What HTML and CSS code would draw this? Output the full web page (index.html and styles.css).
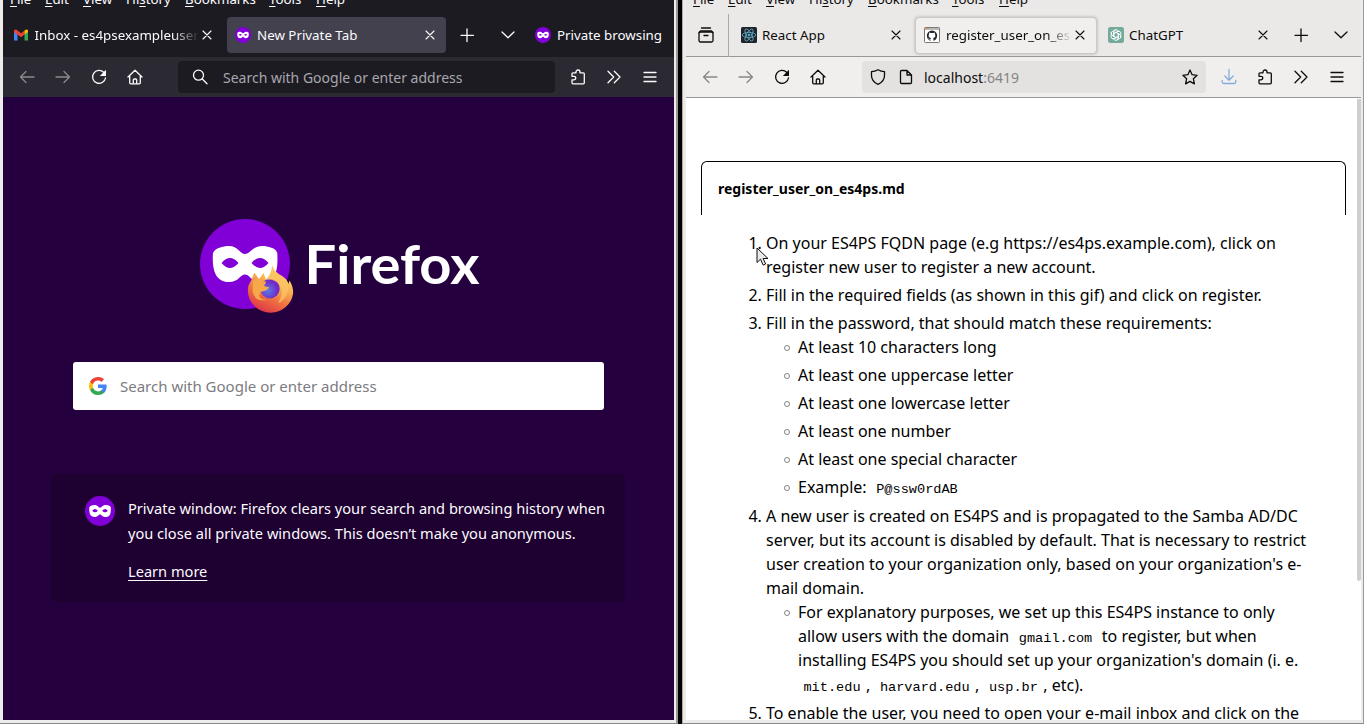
FILE: index.html
```html
<!DOCTYPE html>
<html lang="en">
<head>
<meta charset="utf-8">
<title>Private browsing and localhost</title>
<link rel="stylesheet" href="styles.css">
</head>
<body>
<svg class="defs" width="0" height="0" aria-hidden="true">
  <defs>
    <linearGradient id="flame" x1=".85" y1="0" x2=".35" y2="1"><stop offset="0" stop-color="#ffe37a"/><stop offset=".4" stop-color="#f9b555"/><stop offset=".7" stop-color="#ee7040"/><stop offset="1" stop-color="#de3648"/></linearGradient>
    <radialGradient id="globe" cx=".4" cy=".6"><stop offset="0" stop-color="#5a7be8"/><stop offset="1" stop-color="#7229c8"/></radialGradient>
  </defs>
  <symbol id="back" viewBox="0 0 16 16"><path d="M15 8H1.5M7 2.5 1.5 8 7 13.5"/></symbol>
  <symbol id="forward" viewBox="0 0 16 16"><path d="M1 8h13.5M9 2.5 14.500 8 9 13.500"/></symbol>
  <symbol id="reload" viewBox="0 0 16 16"><path d="M12.700 3.300A6.500 6.500 0 1 0 14.500 9"/><path class="solid" d="M15 .8v6.200H8.800z"/></symbol>
  <symbol id="home" viewBox="0 0 16 16"><path d="M1 8 8 1.200 15 8M2.700 7v6.800q0 1 1 1h8.600q1 0 1-1V7M6.300 14.500v-3.500q0-1 1-1h1.400q1 0 1 1v3.500"/></symbol>
  <symbol id="search" viewBox="0 0 16 16"><circle cx="6.500" cy="6.200" r="5"/><path d="m10.300 10 4.700 4.700"/></symbol>
  <symbol id="puzzle" viewBox="0 0 16 16"><path d="M6 3.800V3a2 2 0 0 1 4 0v.8h3.300q1 0 1 1v9q0 1-1 1H3q-1 0-1-1v-3h2a1.700 1.700 0 0 0 0-3.500H2V4.800q0-1 1-1z"/></symbol>
  <symbol id="more" viewBox="0 0 16 16"><path d="m2 2.300 5.700 5.700L2 13.700M8.300 2.300 14 8l-5.700 5.700"/></symbol>
  <symbol id="menu" viewBox="0 0 16 16"><path d="M2 3.500h12M2 8h12M2 12.500h12"/></symbol>
  <symbol id="close" viewBox="0 0 16 16"><path d="m4 4 8 8m0-8-8 8"/></symbol>
  <symbol id="plus" viewBox="0 0 16 16"><path d="M8 2v12.500M2 8.300h12.500"/></symbol>
  <symbol id="chevron" viewBox="0 0 16 16"><path d="m2 5 6 5.700L14 5"/></symbol>
  <symbol id="mask" viewBox="0 0 90 90"><circle cx="45" cy="45" r="45" fill="#8000d7"/><path fill="#fff" fill-rule="evenodd" d="M13 34C15 29 23 27 29 27 38 27 40 35 45 35 50 35 53 27 62 27 68 27 76 29 77.300 34 78 50 77 63 61 63 51 63 50 55.500 45 55.500S39 63 29 63C14 63 12 48 13 34zM21.500 44q8.500-10 17 0-8.500 10-17 0zm30 0q8.500-10 17 0-8.500 10-17 0z"/></symbol>
</svg>

<div class="desktop">
  <section class="window dark">
    <nav class="menubar"><span class="m1"><u>F</u>ile</span><span class="m2"><u>E</u>dit</span><span class="m3"><u>V</u>iew</span><span class="m4">Hi<u>s</u>tory</span><span class="m5"><u>B</u>ookmarks</span><span class="m6"><u>T</u>ools</span><span class="m7"><u>H</u>elp</span></nav>
    <div class="tabs">
      <div class="tab inbox">
        <svg class="fav" viewBox="0 0 16 16"><path fill="#4285f4" d="M1 4v9.500h3.500V6z"/><path fill="#34a853" d="M15 4v9.500h-3.500V6z"/><path fill="#ea4335" d="M1 3.500Q2.500 1.500 4.500 3.500L8 6.300l3.500-2.800v4L8 10.300 1 5z"/><path fill="#fbbc04" d="M11.500 3.500Q14 1.500 15 3.500V5l-3.500 2.500z"/></svg>
        <span class="label fade">Inbox - es4psexampleuser</span>
        <svg class="ico"><use href="#close"/></svg>
      </div>
      <div class="tab active">
        <svg class="fav"><use href="#mask"/></svg><span class="label">New Private Tab</span><svg class="ico"><use href="#close"/></svg>
      </div>
      <svg class="ico add"><use href="#plus"/></svg>
      <svg class="ico list"><use href="#chevron"/></svg>
      <div class="private"><svg class="fav"><use href="#mask"/></svg><span>Private browsing</span></div>
    </div>
    <div class="toolbar">
      <div class="navs"><svg class="ico dim"><use href="#back"/></svg><svg class="ico dim"><use href="#forward"/></svg><svg class="ico"><use href="#reload"/></svg><svg class="ico"><use href="#home"/></svg></div>
      <div class="url"><svg class="ico"><use href="#search"/></svg><span>Search with Google or enter address</span></div>
      <div class="tools"><svg class="ico"><use href="#puzzle"/></svg><svg class="ico"><use href="#more"/></svg><svg class="ico"><use href="#menu"/></svg></div>
    </div>
    <main class="private-page">
      <svg class="brand" viewBox="0 0 280 94">
        <use href="#mask" width="90" height="90"/>
        <path fill="url(#flame)" d="M72.300 46.500Q74 53 82 57q5 3 6.500 8l1-3.500q4 6 3.600 13A22.500 22.500 0 0 1 70.500 93.700 22.700 22.700 0 0 1 47.800 72q0-6 3.200-10l3.300-8.500 4.700 6.500 4.500-6 2.500 6.500q5-4 6.300-14z"/>
        <circle cx="70" cy="69.700" r="9.700" fill="url(#globe)"/>
        <path fill="#fbc463" d="M72.300 46.500Q74 53 82 57q8 5 6 15-3 10-10 12 7-11 1.500-18-4-6-13-5.500 5-5 5.800-14z" opacity=".75"/>
        <path fill="#f6a94a" d="m53 62 4-2.500 4.500 3h5l-2.500 4.500 5.500 1.500q-3 3.500-9 4.500-4 7 6 8-12 2-14-9z"/>
        <text class="wordmark" x="104.500" y="65" textLength="175" lengthAdjust="spacingAndGlyphs">Firefox</text>
      </svg>
      <div class="handoff">
        <svg class="google" viewBox="0 0 18 18"><path fill="#4285f4" d="M17.600 9.200q0-1-.15-1.800H9v3.500h4.800a4.100 4.100 0 0 1-1.800 2.700V16h3c1.700-1.600 2.600-4 2.600-6.800z"/><path fill="#34a853" d="M9 18c2.400 0 4.500-.8 6-2.200l-3-2.200A5.400 5.400 0 0 1 4 10.700H1V13a9 9 0 0 0 8 5z"/><path fill="#fbbc05" d="M4 10.700a5.400 5.400 0 0 1 0-3.400V5H1a9 9 0 0 0 0 8z"/><path fill="#ea4335" d="M9 3.600c1.300 0 2.500.4 3.400 1.300L15 2.300A9 9 0 0 0 1 5l3 2.300a5.400 5.400 0 0 1 5-3.700z"/></svg>
        <span>Search with Google or enter address</span>
      </div>
      <div class="info">
        <svg class="info-mask"><use href="#mask"/></svg>
        <div><p>Private window: Firefox clears your search and browsing history when<br>you close all private windows. This doesn’t make you anonymous.</p><a>Learn more</a></div>
      </div>
    </main>
  </section>

  <section class="window light">
    <nav class="menubar"><span class="m1"><u>F</u>ile</span><span class="m2"><u>E</u>dit</span><span class="m3"><u>V</u>iew</span><span class="m4">Hi<u>s</u>tory</span><span class="m5"><u>B</u>ookmarks</span><span class="m6"><u>T</u>ools</span><span class="m7"><u>H</u>elp</span></nav>
    <div class="tabs">
      <div class="view"><svg class="ico" viewBox="0 0 16 16"><rect x="1" y="5" width="14" height="10" rx="1.500"/><path d="M1 5.500 2.500 4h11L15 5.500M3.500 1h9M6 8.500h4"/></svg></div>
      <div class="tab react">
        <svg class="fav" viewBox="0 0 16 16"><rect width="16" height="16" rx="1.500" fill="#20232a"/><g fill="none" stroke="#61aecb" stroke-width=".8"><ellipse cx="8" cy="8" rx="6.800" ry="2.600"/><ellipse cx="8" cy="8" rx="6.800" ry="2.600" transform="rotate(60 8 8)"/><ellipse cx="8" cy="8" rx="6.800" ry="2.600" transform="rotate(120 8 8)"/></g><circle cx="8" cy="8" r="1.300" fill="#61aecb"/></svg>
        <span class="label">React App</span><svg class="ico"><use href="#close"/></svg>
      </div>
      <div class="tab active">
        <svg class="fav" viewBox="0 0 16 16"><rect x=".5" y=".5" width="15" height="15" rx=".8" fill="#fff" stroke="#777"/><path d="M1 2h14" stroke="#777"/><path d="M1 1.500h4" stroke="#e79849"/><circle cx="8" cy="8.700" r="5.200" fill="#24292e"/><path fill="#fff" d="M5.300 5.500 6.800 6h2.400l1.500-.5.300 1.500q1.200 3.500-1.800 3.900.4.500.3 3.200h-3v-1.200q-1.400.4-2-.9l-.7-.7q1 0 1.400.9.500.6 1.300.2l.3-1.500Q3.800 10.500 5 7z"/></svg>
        <span class="label fade">register_user_on_es4ps</span><svg class="ico"><use href="#close"/></svg>
      </div>
      <div class="tab chat">
        <svg class="fav" viewBox="0 0 16 16"><rect width="16" height="16" rx="2.500" fill="#74aa9c"/><g fill="none" stroke="#fff" stroke-width=".85"><path id="knot" d="M5.700 9.300V4.800q.4-2.100 2.500-2.100 1.600 0 2.300 1.300M5.700 6.700l3.700-2.100q2-1 3.400.8"/><use href="#knot" transform="rotate(60 8 8)"/><use href="#knot" transform="rotate(120 8 8)"/><use href="#knot" transform="rotate(180 8 8)"/><use href="#knot" transform="rotate(240 8 8)"/><use href="#knot" transform="rotate(300 8 8)"/></g></svg>
        <span class="label">ChatGPT</span><svg class="ico"><use href="#close"/></svg>
      </div>
      <svg class="ico add"><use href="#plus"/></svg>
      <svg class="ico list"><use href="#chevron"/></svg>
    </div>
    <div class="toolbar">
      <div class="navs"><svg class="ico dim"><use href="#back"/></svg><svg class="ico dim"><use href="#forward"/></svg><svg class="ico"><use href="#reload"/></svg><svg class="ico"><use href="#home"/></svg></div>
      <div class="url">
        <svg class="ico" viewBox="0 0 16 16"><path d="M8 .8q3 1.700 6.500 1.900v3.800q0 6-6.500 8.800-6.500-2.800-6.500-8.800V2.700Q5 2.500 8 .8z"/></svg>
        <svg class="ico page" viewBox="0 0 16 16"><path d="M3.500 1.500H9l4.500 4.500v7.500q0 1-1 1h-9q-1 0-1-1v-11q0-1 1-1zM9 1.500V6h4.500"/></svg>
        <span>localhost<i>:6419</i></span>
        <svg class="ico star" viewBox="0 0 16 16"><path d="m8 1 2.100 4.700 5 .6-3.700 3.500 1 5.100L8 12.400l-4.400 2.500 1-5.100L.9 6.300l5-.6z"/></svg>
      </div>
      <div class="tools"><svg class="ico download" viewBox="0 0 16 16"><path d="M8 .500v10.500M3.800 7 8 11.200 12.200 7M1.200 11.500v1.500q0 1.500 1.500 1.500h10.600q1.500 0 1.500-1.500v-1.500"/></svg><svg class="ico"><use href="#puzzle"/></svg><svg class="ico"><use href="#more"/></svg><svg class="ico"><use href="#menu"/></svg></div>
    </div>
    <main class="doc-page">
      <div class="document">
        <header class="filename">register_user_on_es4ps.md</header>
        <article class="markdown">
          <ol>
            <li>On your ES4PS FQDN page (e.g https://es4ps.example.com), click on<br>register new user to register a new account.</li>
            <li>Fill in the required fields (as shown in this gif) and click on register.</li>
            <li>Fill in the password, that should match these requirements:
              <ul>
                <li>At least 10 characters long</li>
                <li>At least one uppercase letter</li>
                <li>At least one lowercase letter</li>
                <li>At least one number</li>
                <li>At least one special character</li>
                <li class="tall">Example: <code>P@ssw0rdAB</code></li>
              </ul>
            </li>
            <li>A new user is created on ES4PS and is propagated to the Samba AD/DC<br>server, but its account is disabled by default. That is necessary to restrict<br>user creation to your organization only, based on your organization's e-<br>mail domain.
              <ul>
                <li>For explanatory purposes, we set up this ES4PS instance to only<br>allow users with the domain <code>gmail.com</code> to register, but when<br>installing ES4PS you should set up your organization's domain (i. e.<span class="domains"><code>mit.edu</code>, <code>harvard.edu</code>, <code>usp.br</code>, etc).</span></li>
              </ul>
            </li>
            <li>To enable the user, you need to open your e-mail inbox and click on the</li>
          </ol>
        </article>
      </div>
      <div class="scrollbar"></div>
    </main>
  </section>
  <svg class="cursor" viewBox="0 0 13 20"><path d="M1 1v14.500l3.500-3.300 2.700 6 2.500-1.200-2.600-5.500H12z" fill="#e8e8e8" stroke="#111"/></svg>
</div>
</body>
</html>
```
FILE: styles.css
```css
*, *::before { box-sizing: border-box; }
body { margin: 0; overflow: hidden; font: 15px/20px "Noto Sans", sans-serif; }
.defs { position: absolute; }
.desktop { position: relative; display: flex; gap: 4px; width: 1364px; height: 724px; background: #000; }
.window { display: flex; flex-direction: column; height: 724px; overflow: hidden; white-space: nowrap; border-bottom: 1px solid #888; }
.dark { width: 678px; border-right: 2px solid #9a9996; color: #fbfbfe; background: #eeedeb; padding: 0 2px 3px 3px; }
.light { width: 682px; border-left: 1px solid #aaa; border-right: 1px solid #999; color: #0c0c0d; background: #edebe9; padding: 0 2px 3px 3px; }

.menubar { display: flex; align-items: flex-end; height: 14px; padding: 0 0 5px 7px; flex: none; font-size: 13.333px; }
.menubar u { text-underline-offset: 2px; text-decoration-thickness: 1px; text-decoration-skip-ink: none; }
.m1 { width: 35px; } .m2 { width: 38px; } .m3 { width: 43px; } .m4 { width: 59px; } .m5 { width: 84px; } .m6 { width: 47px; }
.dark .menubar, .dark .tabs { background: #1c1b22; }
.light .menubar, .light .tabs { background: #eae9e7; }

.ico { flex: none; width: 16px; height: 16px; fill: none; stroke: currentColor; stroke-width: 1.3; stroke-linejoin: round; stroke-linecap: round; overflow: visible; }
.solid { fill: currentColor; stroke: none; }
.dim { opacity: .45; }
.fav { flex: none; width: 16px; height: 16px; }
.tabs { display: flex; align-items: center; height: 43px; flex: none; font-size: 13.333px; }
.tab { display: flex; align-items: center; height: 36px; border-radius: 4px; }
.tab .fav { margin-right: 5px; }
.tab .label { flex: 1; min-width: 0; overflow: hidden; }
.tab > .ico { stroke-width: 1.1; }
.fade { mask-image: linear-gradient(to right, #000 calc(100% - 26px), transparent); }
.dark .tabs { padding-bottom: 1px; }
.dark .tab { width: 219px; padding: 0 8px; }
.dark .tab.active { background: #42414d; }
.dark .tab .fav { margin-right: 6px; }
.dark .tab.inbox { width: 224px; padding: 0 12px 0 10px; }
.dark .tab.inbox .fav { margin-right: 5.5px; }
.dark .add { margin-left: 13px; }
.dark .list { margin-left: 25px; }
.private { display: flex; gap: 6px; align-items: center; margin-left: 19px; }

.toolbar { display: flex; align-items: center; height: 40px; flex: none; font-size: 14px; line-height: 21px; }
.toolbar span { padding-top: 1px; }
.dark .toolbar { background: #2b2a33; }
.navs { display: flex; gap: 20px; padding-left: 16px; }
.url { display: flex; align-items: center; height: 32px; border-radius: 4px; }
.dark .url { width: 377px; margin-left: 35px; padding-left: 14px; gap: 15px; background: #1c1b22; color: #a8a7ad; }
.dark .url .ico { color: #fbfbfe; }
.tools { display: flex; gap: 20px; padding-left: 15px; }

.private-page { flex: 1; display: flex; flex-direction: column; align-items: center; background: #25003e; }
.brand { width: 280px; height: 94px; margin-top: 122px; margin-left: 2px; flex: none; overflow: visible; }
.wordmark { font: 700 54px Lato, sans-serif; fill: #fff; }
.handoff { display: flex; align-items: center; gap: 13px; width: 531px; height: 48px; flex: none; margin-top: 49px; padding-left: 16px; border-radius: 3px; background: #fff; color: #7b7b80; }
.google { width: 18px; height: 18px; }
.info { display: flex; gap: 13px; width: 574px; height: 128px; flex: none; margin-top: 64px; margin-right: 1px; padding: 22px 0 0 34px; border-radius: 6px; background: #1e0031; font-size: 14.6px; line-height: 25px; }
.info p { margin: 0 0 13px; }
.info a { text-decoration: underline; text-underline-offset: 3px; }
.info-mask { width: 30px; height: 30px; }

.light .tabs { border-bottom: 1px solid #999896; }
.light .toolbar { height: 41px; background: #f0efed; border-bottom: 1px solid #999896; }
.light .navs { padding-left: 15.5px; }
.view { display: flex; align-items: center; width: 43px; height: 43px; padding-left: 12px; border-right: 1px solid #aaa9a7; }
.light .tab.react { width: 186px; padding: 0 11px 0 12px; }
.light .tab.active { width: 182px; height: 37px; padding: 0 8px; border: 1px solid #cbc9c6; background: #f0efed; box-shadow: 0 0 3px #aaa; }
.light .tab.active .fav { margin-right: 6px; }
.light .tab.chat { width: 183px; padding: 0 9px 0 11px; }
.light .add { margin-left: 13px; }
.light .list { margin-left: 24px; }
.light .url { width: 344px; margin-left: 36.5px; padding: 0 8px; background: #e3e2e0; }
.light .url .page { margin-left: 12px; }
.light .url span { flex: 1; margin-left: 10px; }
.url i { font-style: normal; color: #858483; }
.download { color: #86abdf; }

.doc-page { flex: 1; min-height: 0; display: flex; background: #fff; color: #000; overflow: hidden; }
.document { width: 645px; margin: 63px 11px 0 15px; flex: none; }
.filename { height: 54px; padding: 17px 16px; border: 1px solid #000; border-bottom: 0; border-radius: 6px 6px 0 0; font-size: 14px; font-weight: 700; }
.markdown { padding: 16px 32px 0 33px; font-size: 16px; line-height: 24px; }
.markdown ol { margin: 0; padding-left: 32px; }
.markdown ul { margin: 0; padding-left: 32px; list-style: none; }
.markdown li + li { margin-top: 4px; }
.markdown ul li::before { content: ""; display: inline-block; width: 6px; height: 6px; margin: 0 8px 0 -14px; border: 1px solid #858585; border-radius: 50%; vertical-align: 2px; }
.markdown code { font: 13.6px/0 "Liberation Mono", monospace; padding: 2.7px 5.44px; }
.tall { padding-bottom: 1px; }
.domains { display: block; padding-top: 1px; }
.scrollbar { width: 4px; height: 482px; margin-top: 1px; border-radius: 0 0 2px 2px; background: #cfcfcf; flex: none; }
.cursor { position: absolute; left: 756px; top: 247px; width: 13px; height: 20px; }
```
